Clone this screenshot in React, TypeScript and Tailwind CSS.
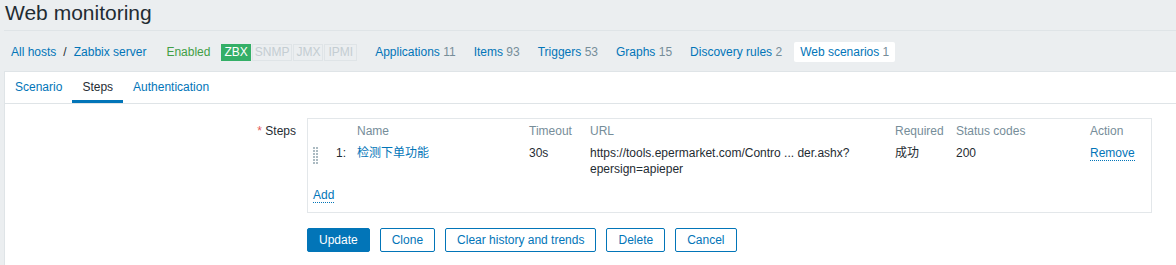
import React from "react";

const navLinks = [
  { label: "Applications", count: 11 },
  { label: "Items", count: 93 },
  { label: "Triggers", count: 53 },
  { label: "Graphs", count: 15 },
  { label: "Discovery rules", count: 2 },
];

function DragHandle() {
  const dots = [];
  for (let r = 0; r < 6; r++) {
    for (let c = 0; c < 2; c++) {
      dots.push(<rect key={`${r}-${c}`} x={c * 3} y={r * 3} width="2" height="2" fill="#acbbc2" />);
    }
  }
  return (
    <svg width="5" height="18" viewBox="0 0 5 18">
      {dots}
    </svg>
  );
}

export default function App() {
  return (
    <div className="w-[1176px] h-[265px] overflow-hidden bg-[#ebeef0] font-['Liberation_Sans','Noto_Sans_CJK_SC',sans-serif] text-[12px] text-[#1f2c33]">
      {/* Title */}
      <div className="ml-[4px] h-[31px] border-b border-[#dfe4e7]">
        <h1 className="pl-[1px] text-[21px] leading-[25px] font-normal text-[#1f2c33]">Web monitoring</h1>
      </div>

      {/* Host navigation */}
      <div className="ml-[4px] h-[40px] flex items-center pl-[7px] pt-[2px] leading-[14px]">
        <a className="text-[#0275b8]">All hosts</a>
        <span className="mx-[7px] text-[#1f2c33]">/</span>
        <a className="text-[#0275b8]">Zabbix server</a>
        <span className="ml-[20px] text-[#429e47]">Enabled</span>
        <div className="ml-[11px] flex gap-[1px]">
          <span className="px-[2px] h-[17px] bg-[#34af67] text-white border border-[#34af67] flex items-center">ZBX</span>
          <span className="px-[2px] h-[17px] border border-[#dfe4e7] text-[#c4cdd2] flex items-center">SNMP</span>
          <span className="px-[2px] h-[17px] border border-[#dfe4e7] text-[#c4cdd2] flex items-center">JMX</span>
          <span className="px-[3px] h-[17px] border border-[#dfe4e7] text-[#c4cdd2] flex items-center">IPMI</span>
        </div>
        <div className="ml-[12px] flex items-center gap-[6px]">
          {navLinks.map((l) => (
            <a key={l.label} className="px-[6px] text-[#0275b8]">
              {l.label} <span className="text-[#768d99]">{l.count}</span>
            </a>
          ))}
          <a className="px-[6px] h-[20px] flex items-center bg-white rounded-[2px] text-[#0275b8]">
            Web scenarios&nbsp;<span className="text-[#768d99]">1</span>
          </a>
        </div>
      </div>

      {/* Panel */}
      <div className="ml-[4px] bg-white border-l border-t border-[#dfe4e7] h-[200px]">
        <div className="flex border-b border-[#dfe4e7] leading-[14px]">
          <a className="h-[31px] px-[10px] pt-[1px] flex items-center border-b-[3px] border-transparent text-[#0275b8]">Scenario</a>
          <a className="h-[31px] px-[10px] pt-[1px] flex items-center border-b-[3px] border-[#0275b8] text-[#1f2c33]">Steps</a>
          <a className="h-[31px] px-[10px] pt-[1px] flex items-center border-b-[3px] border-transparent text-[#0275b8]">Authentication</a>
        </div>

        <div className="pt-[14px]">
          <div className="flex">
            <div className="w-[291px] text-right pt-[6px] leading-[14px]">
              <span className="text-[#e45959]">*</span> Steps
            </div>
            <div className="ml-[11px]">
              <div className="w-[845px] border border-[#e3e7ea] pl-[5px] pt-[4px] pb-[9px] leading-4">
                <div className="grid grid-cols-[23px_21px_172px_61px_305px_61px_134px_1fr] text-[#768d99]">
                  <span />
                  <span />
                  <span>Name</span>
                  <span>Timeout</span>
                  <span>URL</span>
                  <span>Required</span>
                  <span>Status codes</span>
                  <span>Action</span>
                </div>
                <div className="mt-[6px] grid grid-cols-[23px_21px_172px_61px_305px_61px_134px_1fr]">
                  <span className="pt-[2px]">
                    <DragHandle />
                  </span>
                  <span>1:</span>
                  <a className="text-[#0275b8]">检测下单功能</a>
                  <span>30s</span>
                  <span>
                    https://tools.epermarket.com/Contro ... der.ashx?
                    <br />
                    epersign=apieper
                  </span>
                  <span>成功</span>
                  <span>200</span>
                  <span>
                    <a className="text-[#0275b8] border-b border-dotted border-[#0275b8]">Remove</a>
                  </span>
                </div>
                <div className="mt-[10px]">
                  <a className="text-[#0275b8] border-b border-dotted border-[#0275b8]">Add</a>
                </div>
              </div>

              <div className="mt-[15px] flex gap-[10px]">
                <button className="h-[24px] px-[11px] rounded-[2px] bg-[#0275b8] border border-[#0275b8] text-white">Update</button>
                <button className="h-[24px] px-[11px] rounded-[2px] bg-white border border-[#0275b8] text-[#0275b8]">Clone</button>
                <button className="h-[24px] px-[11px] rounded-[2px] bg-white border border-[#0275b8] text-[#0275b8]">Clear history and trends</button>
                <button className="h-[24px] px-[11px] rounded-[2px] bg-white border border-[#0275b8] text-[#0275b8]">Delete</button>
                <button className="h-[24px] px-[11px] rounded-[2px] bg-white border border-[#0275b8] text-[#0275b8]">Cancel</button>
              </div>
            </div>
          </div>
        </div>
      </div>
    </div>
  );
}
